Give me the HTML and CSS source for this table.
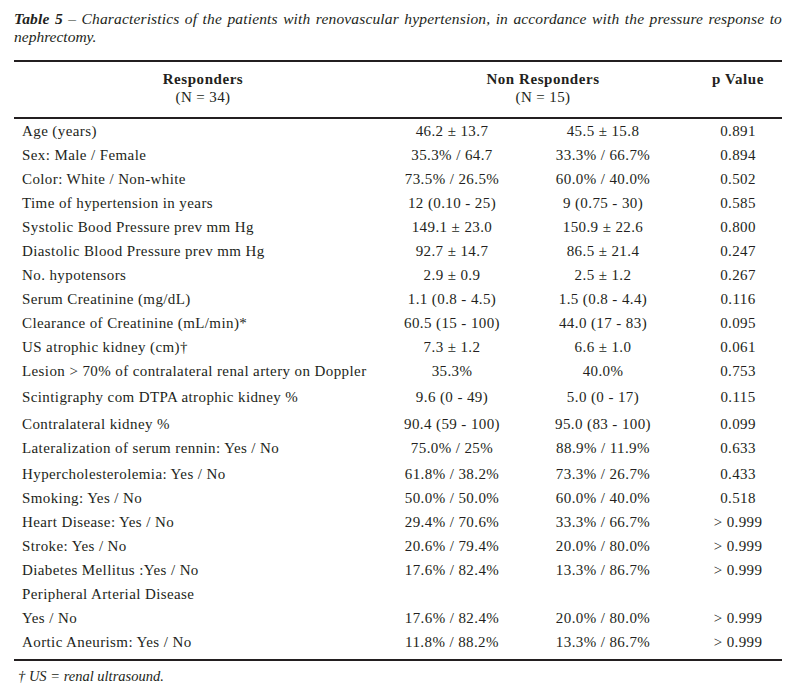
FILE: index.html
```html
<!DOCTYPE html>
<html>
<head>
<meta charset="utf-8">
<link rel="stylesheet" href="styles.css">
</head>
<body>
<div class="page">
  <p class="caption"><span class="l1"><b>Table 5</b> – Characteristics of the patients with renovascular hypertension, in accordance with the pressure response to</span><span class="l2">nephrectomy.</span></p>
  <table class="data">
    <colgroup>
      <col class="w1">
      <col class="w2">
      <col class="w3">
      <col class="w4">
    </colgroup>
    <thead>
      <tr>
        <th>Responders<br><span class="n">(N = 34)</span></th>
        <th colspan="2">Non Responders<br><span class="n">(N = 15)</span></th>
        <th>p Value<br><span class="n">&nbsp;</span></th>
      </tr>
    </thead>
    <tbody>
      <tr><td>Age (years)</td><td>46.2 ± 13.7</td><td>45.5 ± 15.8</td><td>0.891</td></tr>
      <tr><td>Sex: Male / Female</td><td>35.3% / 64.7</td><td>33.3% / 66.7%</td><td>0.894</td></tr>
      <tr><td>Color: White / Non-white</td><td>73.5% / 26.5%</td><td>60.0% / 40.0%</td><td>0.502</td></tr>
      <tr><td>Time of hypertension in years</td><td>12 (0.10 - 25)</td><td>9 (0.75 - 30)</td><td>0.585</td></tr>
      <tr><td>Systolic Bood Pressure prev mm Hg</td><td>149.1 ± 23.0</td><td>150.9 ± 22.6</td><td>0.800</td></tr>
      <tr><td>Diastolic Blood Pressure prev mm Hg</td><td>92.7 ± 14.7</td><td>86.5 ± 21.4</td><td>0.247</td></tr>
      <tr><td>No. hypotensors</td><td>2.9 ± 0.9</td><td>2.5 ± 1.2</td><td>0.267</td></tr>
      <tr><td>Serum Creatinine (mg/dL)</td><td>1.1 (0.8 - 4.5)</td><td>1.5 (0.8 - 4.4)</td><td>0.116</td></tr>
      <tr><td>Clearance of Creatinine (mL/min)*</td><td>60.5 (15 - 100)</td><td>44.0 (17 - 83)</td><td>0.095</td></tr>
      <tr><td>US atrophic kidney (cm)†</td><td>7.3 ± 1.2</td><td>6.6 ± 1.0</td><td>0.061</td></tr>
      <tr><td>Lesion &gt; 70% of contralateral renal artery on Doppler</td><td>35.3%</td><td>40.0%</td><td>0.753</td></tr>
      <tr class="gap2"><td>Scintigraphy com DTPA atrophic kidney %</td><td>9.6 (0 - 49)</td><td>5.0 (0 - 17)</td><td>0.115</td></tr>
      <tr class="gap3"><td>Contralateral kidney %</td><td>90.4 (59 - 100)</td><td>95.0 (83 - 100)</td><td>0.099</td></tr>
      <tr><td>Lateralization of serum rennin: Yes / No</td><td>75.0% / 25%</td><td>88.9% / 11.9%</td><td>0.633</td></tr>
      <tr class="gap2"><td>Hypercholesterolemia: Yes / No</td><td>61.8% / 38.2%</td><td>73.3% / 26.7%</td><td>0.433</td></tr>
      <tr><td>Smoking: Yes / No</td><td>50.0% / 50.0%</td><td>60.0% / 40.0%</td><td>0.518</td></tr>
      <tr><td>Heart Disease: Yes / No</td><td>29.4% / 70.6%</td><td>33.3% / 66.7%</td><td>&gt; 0.999</td></tr>
      <tr><td>Stroke: Yes / No</td><td>20.6% / 79.4%</td><td>20.0% / 80.0%</td><td>&gt; 0.999</td></tr>
      <tr><td>Diabetes Mellitus :Yes / No</td><td>17.6% / 82.4%</td><td>13.3% / 86.7%</td><td>&gt; 0.999</td></tr>
      <tr><td>Peripheral Arterial Disease</td><td></td><td></td><td></td></tr>
      <tr><td>Yes / No</td><td>17.6% / 82.4%</td><td>20.0% / 80.0%</td><td>&gt; 0.999</td></tr>
      <tr class="last"><td>Aortic Aneurism: Yes / No</td><td>11.8% / 88.2%</td><td>13.3% / 86.7%</td><td>&gt; 0.999</td></tr>
    </tbody>
  </table>
  <p class="foot">† US = renal ultrasound.</p>
</div>
</body>
</html>
```

FILE: styles.css
```css
html, body {
  margin: 0;
  padding: 0;
  background: #ffffff;
}
body {
  font-family: "Liberation Serif", "Times New Roman", serif;
  color: #231f20;
}
.page {
  width: 768px;
  padding: 10px 10px 0 14px;
}
.caption {
  margin: 0;
  font-style: italic;
  font-size: 15.5px;
  line-height: 18px;
}
.caption .l1 {
  display: block;
  white-space: nowrap;
  letter-spacing: 0.15px;
  text-align: justify;
  text-align-last: justify;
}
.caption .l2 {
  display: block;
}
.caption b {
  font-weight: bold;
}
.data {
  margin-top: 14px;
  width: 768px;
  border-collapse: collapse;
  table-layout: fixed;
  font-size: 15px;
  letter-spacing: 0.4px;
  border-top: 2px solid #231f20;
  border-bottom: 2px solid #231f20;
}
.w1 { width: 378px; }
.w2 { width: 120px; }
.w3 { width: 182px; }
.w4 { width: 88px; }
.data th {
  font-weight: bold;
  letter-spacing: 0.55px;
  text-align: center;
  vertical-align: top;
  line-height: 18px;
  padding: 8px 0 11px;
  border-bottom: 2px solid #231f20;
}
.data th .n {
  font-weight: normal;
  letter-spacing: 0.4px;
}
.data td {
  height: 24px;
  padding: 0;
  line-height: 24px;
  text-align: center;
  white-space: nowrap;
  vertical-align: middle;
}
.data td:first-child {
  text-align: left;
  padding-left: 8px;
}
.data tr.gap2 td { padding-top: 2px; }
.data tr.gap3 td { padding-top: 3px; }
.data tr.last td { padding-bottom: 5px; }
.foot {
  margin: 6px 0 0 4px;
  font-style: italic;
  font-size: 14.5px;
  line-height: 18px;
}
```
